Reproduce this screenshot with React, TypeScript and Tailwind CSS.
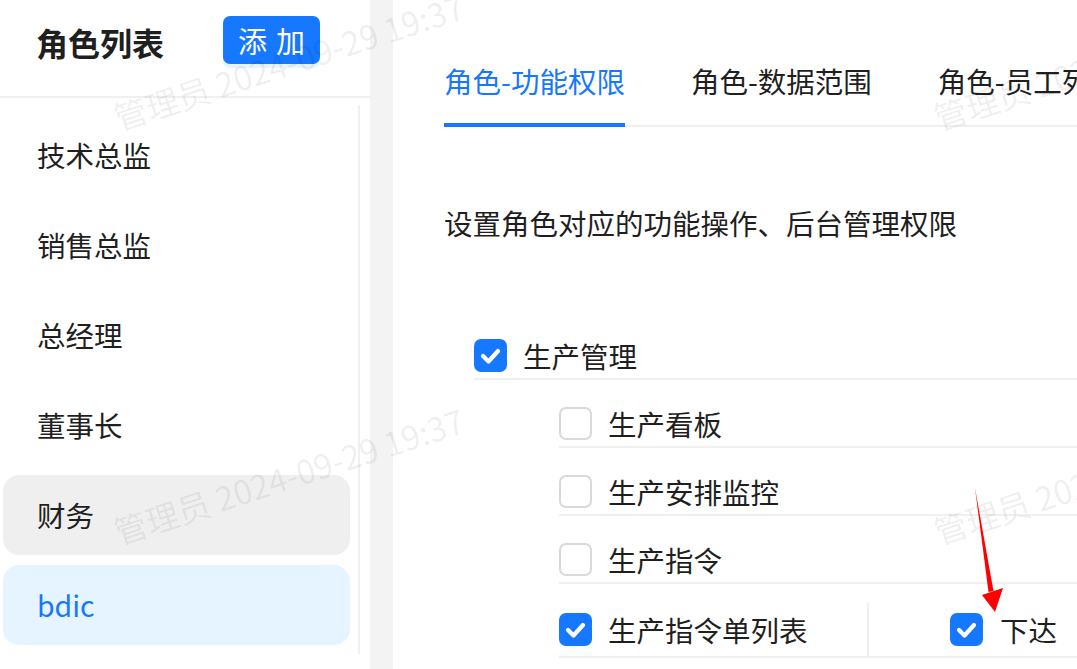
import React from 'react';

const FONT = '"Noto Sans CJK SC", "Noto Sans", sans-serif';

const roles = [
  { name: '技术总监' },
  { name: '销售总监' },
  { name: '总经理' },
  { name: '董事长' },
  { name: '财务', hover: true },
  { name: 'bdic', active: true },
];

function Checkbox({ checked }: { checked?: boolean }) {
  if (checked) {
    return (
      <span className="w-[33px] h-[33px] rounded-[7px] bg-[#1677ff] flex items-center justify-center shrink-0">
        <svg width="33" height="33" viewBox="0 0 33 33">
          <path d="M9 17 L14.5 22.5 L24 12" fill="none" stroke="#fff" strokeWidth="4.2" strokeLinecap="round" strokeLinejoin="round" />
        </svg>
      </span>
    );
  }
  return <span className="w-[33px] h-[33px] rounded-[7px] border-2 border-[#d9d9d9] bg-white shrink-0" />;
}

function TreeRow({ label, checked, indent }: { label: string; checked?: boolean; indent?: boolean }) {
  return (
    <div className={`flex items-center pt-[27px] pb-[6px] border-b-2 border-[#f0f0f0] ${indent ? 'ml-[85px]' : ''}`}>
      <Checkbox checked={checked} />
      <span className="ml-[16px] text-[28.5px] leading-[33px] text-[#1f1f1f] whitespace-nowrap">{label}</span>
    </div>
  );
}

// 水印
const marks = [
  { left: 120, top: 100 },
  { left: 120, top: 514 },
  { left: 940, top: 100 },
  { left: 940, top: 514 },
];

export default function App() {
  return (
    <div className="relative w-[1077px] h-[669px] flex overflow-hidden bg-white" style={{ fontFamily: FONT }}>
      {/* 左侧角色列表 */}
      <div className="w-[370px] shrink-0 bg-white flex flex-col">
        <div className="h-[98px] border-b-2 border-[#f0f0f0] flex items-start pt-[16px] pl-[36px] gap-[59px]">
          <h2 className="text-[32px] leading-[54px] font-bold text-[#1f1f1f] -mt-[1px]">角色列表</h2>
          <button className="w-[97px] h-[48px] rounded-[7px] bg-[#1677ff] text-white text-[29px] leading-none flex items-center justify-center gap-[9px] shadow-[0_4px_0_rgba(5,145,255,0.1)]">
            <span>添</span>
            <span>加</span>
          </button>
        </div>
        <div className="mt-[7px] w-[360px] h-[549px] border-r-2 border-[#f0f0f0] pt-[10px] flex flex-col gap-[10px]">
          {roles.map((r) => (
            <div
              key={r.name}
              className={`ml-[3px] w-[347px] h-[80px] shrink-0 rounded-[16px] pl-[34px] flex items-center text-[28.5px] ${
                r.active ? 'bg-[#e6f4ff] text-[#1677ff]' : r.hover ? 'bg-[#efefef] text-[#1f1f1f]' : 'text-[#1f1f1f]'
              }`}
            >
              {r.name}
            </div>
          ))}
        </div>
      </div>

      <div className="w-[23px] shrink-0 bg-[#f3f3f3]" />

      {/* 右侧权限设置 */}
      <div className="flex-1 bg-white overflow-hidden">
        <div className="ml-[51px] flex items-end gap-[66px] border-b-2 border-[#f0f0f0] whitespace-nowrap">
          <div className="pt-[61px] pb-[22px] -mb-[2px] border-b-4 border-[#1677ff] text-[28.5px] leading-[40px] text-[#1677ff]">角色-功能权限</div>
          <div className="pt-[61px] pb-[24px] text-[28.5px] leading-[40px] text-[#1f1f1f]">角色-数据范围</div>
          <div className="pt-[61px] pb-[24px] text-[28.5px] leading-[40px] text-[#1f1f1f]">角色-员工列表</div>
        </div>

        <p className="ml-[51px] mt-[76px] text-[28.5px] leading-[40px] text-[#1f1f1f] whitespace-nowrap">设置角色对应的功能操作、后台管理权限</p>

        <div className="ml-[81px] mt-[69px]">
          <TreeRow label="生产管理" checked />
          <TreeRow label="生产看板" indent />
          <TreeRow label="生产安排监控" indent />
          <TreeRow label="生产指令" indent />
          <div className="ml-[85px] flex items-stretch pt-[19px] border-b-2 border-[#f0f0f0]">
            <div className="w-[310px] shrink-0 flex items-center py-[10px] border-r-2 border-[#f0f0f0]">
              <Checkbox checked />
              <span className="ml-[16px] text-[28.5px] leading-[33px] text-[#1f1f1f] whitespace-nowrap">生产指令单列表</span>
            </div>
            <div className="pl-[81px] flex items-center">
              <Checkbox checked />
              <span className="ml-[17px] text-[28.5px] leading-[33px] text-[#1f1f1f] whitespace-nowrap">下达</span>
            </div>
          </div>
        </div>
      </div>

      {/* watermark */}
      {marks.map((m, i) => (
        <span
          key={i}
          className="absolute pointer-events-none whitespace-nowrap text-[33px] leading-[34px] text-black/[0.07] origin-bottom-left -rotate-[18deg]"
          style={{ left: m.left, top: m.top }}
        >
          管理员 2024-09-29 19:37
        </span>
      ))}

      {/* 标注箭头 */}
      <svg className="absolute inset-0 pointer-events-none" width="1077" height="669" viewBox="0 0 1077 669">
        <polygon points="975,488 993.5,591 988.5,592" fill="#ff0000" />
        <polygon points="982,595 1003,588 995,612" fill="#ff0000" />
      </svg>
    </div>
  );
}
